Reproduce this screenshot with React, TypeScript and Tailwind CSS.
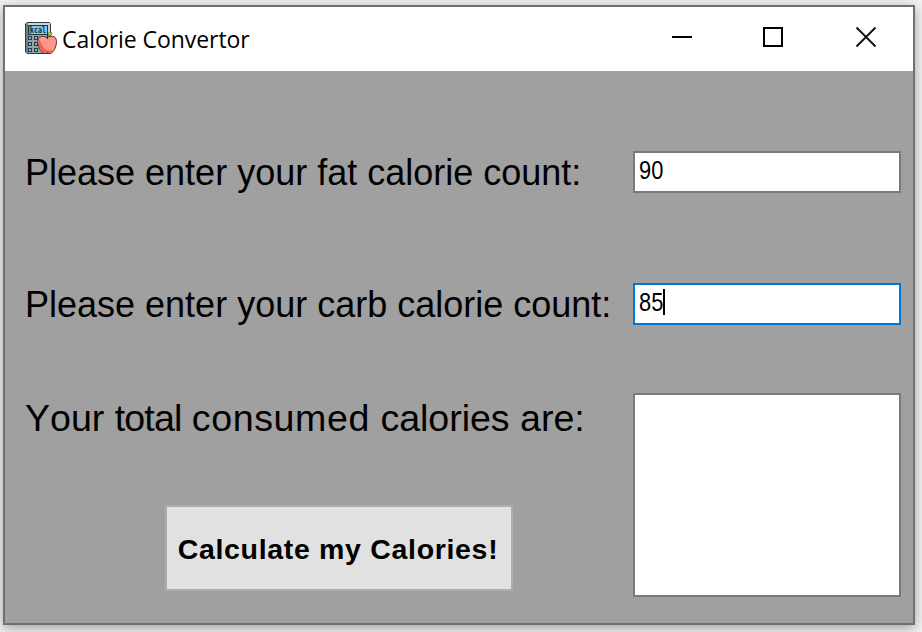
import React from "react";

function CalorieIcon() {
  return (
    <svg width="32" height="32" viewBox="0 0 32 32" className="block">
      <path d="M2 0.5H24.5L25.5 2V31.5H2L0.5 30V2Z" fill="#99a3a6" stroke="#333b40" />
      <path d="M3 1H25V3H3Z" fill="#cdd5d6" />
      <path d="M23 3H25V13H23Z" fill="#c2caca" />
      <path d="M1 2H3V31H1Z" fill="#737f82" />
      <rect x="3.5" y="3.5" width="19" height="9" fill="#7cc8f2" stroke="#26343d" />
      <path d="M4 4H6V12H4Z" fill="#4c9bd3" />
      <text x="5" y="11" fontSize="8" textLength="16" lengthAdjust="spacingAndGlyphs" className="fill-[#122b3d] font-['DejaVu_Sans_Mono',monospace] font-bold">kcal</text>
      <g fill="#70b9ed" stroke="#273943">
        <rect x="3.5" y="14.5" width="3" height="3" />
        <rect x="9.5" y="14.5" width="3" height="3" />
        <rect x="3.5" y="20.5" width="3" height="3" />
        <rect x="9.5" y="20.5" width="3" height="3" />
        <rect x="3.5" y="26.5" width="3" height="3" />
        <rect x="9.5" y="26.5" width="3" height="3" />
      </g>
      <path d="M22 15.5C19 14 16 14 14 15.5C12.5 17 12.3 20 13.2 23C14.5 27.5 17 31 20 31.5L22.5 30.5L25 31.5C28 31 30.2 27 31 23.5C32 19.5 31.5 16.5 29.5 15C27.5 13.7 24.5 14 22 15.5Z" fill="#f9978b" stroke="#532e2d" />
      <path d="M14 17C12.5 20 14.5 26 17 29C19 31 20.5 31 22.5 30C24 31 26 31 28 28C24 29.5 20 28 18 25C16 22 16 19 14 17Z" fill="#f4614d" />
      <path d="M18 16.5H20M16 18H19" stroke="#fbb1a8" />
      <path d="M22.5 17V12.5" fill="none" stroke="#30291f" />
      <path d="M23 13V11.5L24.5 10.5H27V12L25.5 13.3Z" fill="#9bdc1d" stroke="#4b6815" strokeWidth="0.5" />
    </svg>
  );
}

function TitleBar() {
  return (
    <header className="flex h-16 shrink-0 bg-white">
      <div className="pl-5 pt-[15px]"><CalorieIcon /></div>
      <h1 className="pl-[5px] pt-4 font-['Open_Sans','Noto_Sans',sans-serif] text-[23px] leading-8 tracking-[-0.06px] whitespace-nowrap">Calorie Convertor</h1>
      <div className="ml-auto flex pr-[36px] pt-[19px]">
        <button aria-label="Minimize" className="mr-[69px] flex size-[22px] items-center justify-center"><span className="h-0.5 w-5 bg-black" /></button>
        <button aria-label="Maximize" className="mr-[71px] flex size-[22px] items-center justify-center"><span className="size-5 border-2 border-black" /></button>
        <button aria-label="Close" className="flex size-[22px] items-center justify-center">
          <svg width="22" height="22" viewBox="0 0 22 22"><path d="M1.5 1.5L20.5 20.5M20.5 1.5L1.5 20.5" stroke="#111" strokeWidth="1.9" /></svg>
        </button>
      </div>
    </header>
  );
}

export default function App() {
  return (
    <main className="h-[632px] w-[922px] overflow-hidden bg-[#f3f3f3] pl-[3px] pt-[5px] font-['Liberation_Sans',Arial,sans-serif] text-black">
      <section className="flex h-[620px] w-[912px] flex-col border-2 border-[#707070] bg-[#a0a0a0] shadow-[0_3px_12px_rgba(0,0,0,0.35)]">
        <TitleBar />
        <div className="flex flex-1 justify-between pl-5 pr-3">
          <div className="flex flex-col text-[36px] leading-[42px] whitespace-nowrap">
            <label className="mt-[81px]">Please enter your fat calorie count:</label>
            <label className="mt-[90px]">Please enter your carb calorie count:</label>
            <label className="mt-[71px] text-[37.6px] [font-kerning:none]">Your <span className="tracking-[-0.9px]">total</span> <span className="tracking-[0.6px]">consumed</span> <span className="tracking-[-0.05px]">calories</span> are:</label>
            <button className="ml-[140px] mt-[66px] h-[86px] w-[348px] border-2 border-[#adadad] bg-[#e1e1e1] pt-px pr-[2px] text-[28.5px] font-bold tracking-[0.68px]">Calculate my Calories!</button>
          </div>
          <div className="flex w-[268px] flex-col">
            <div className="mt-[80px] flex h-[42px] border-2 border-[#7a7a7a] bg-white pl-1 pt-[2px] text-[26px] leading-[30px]">
              <span className="w-6 origin-left scale-x-[0.84]">90</span>
            </div>
            <div className="mt-[90px] flex h-[42px] border-2 border-[#0078d7] bg-white pl-1 pt-[2px] text-[26px] leading-[30px]">
              <span className="w-6 origin-left scale-x-[0.84]">85</span><span className="mt-0.5 h-[26px] w-0.5 bg-black" />
            </div>
            <div className="mt-[68px] h-[204px] border-2 border-[#7a7a7a] bg-white" />
          </div>
        </div>
      </section>
    </main>
  );
}
